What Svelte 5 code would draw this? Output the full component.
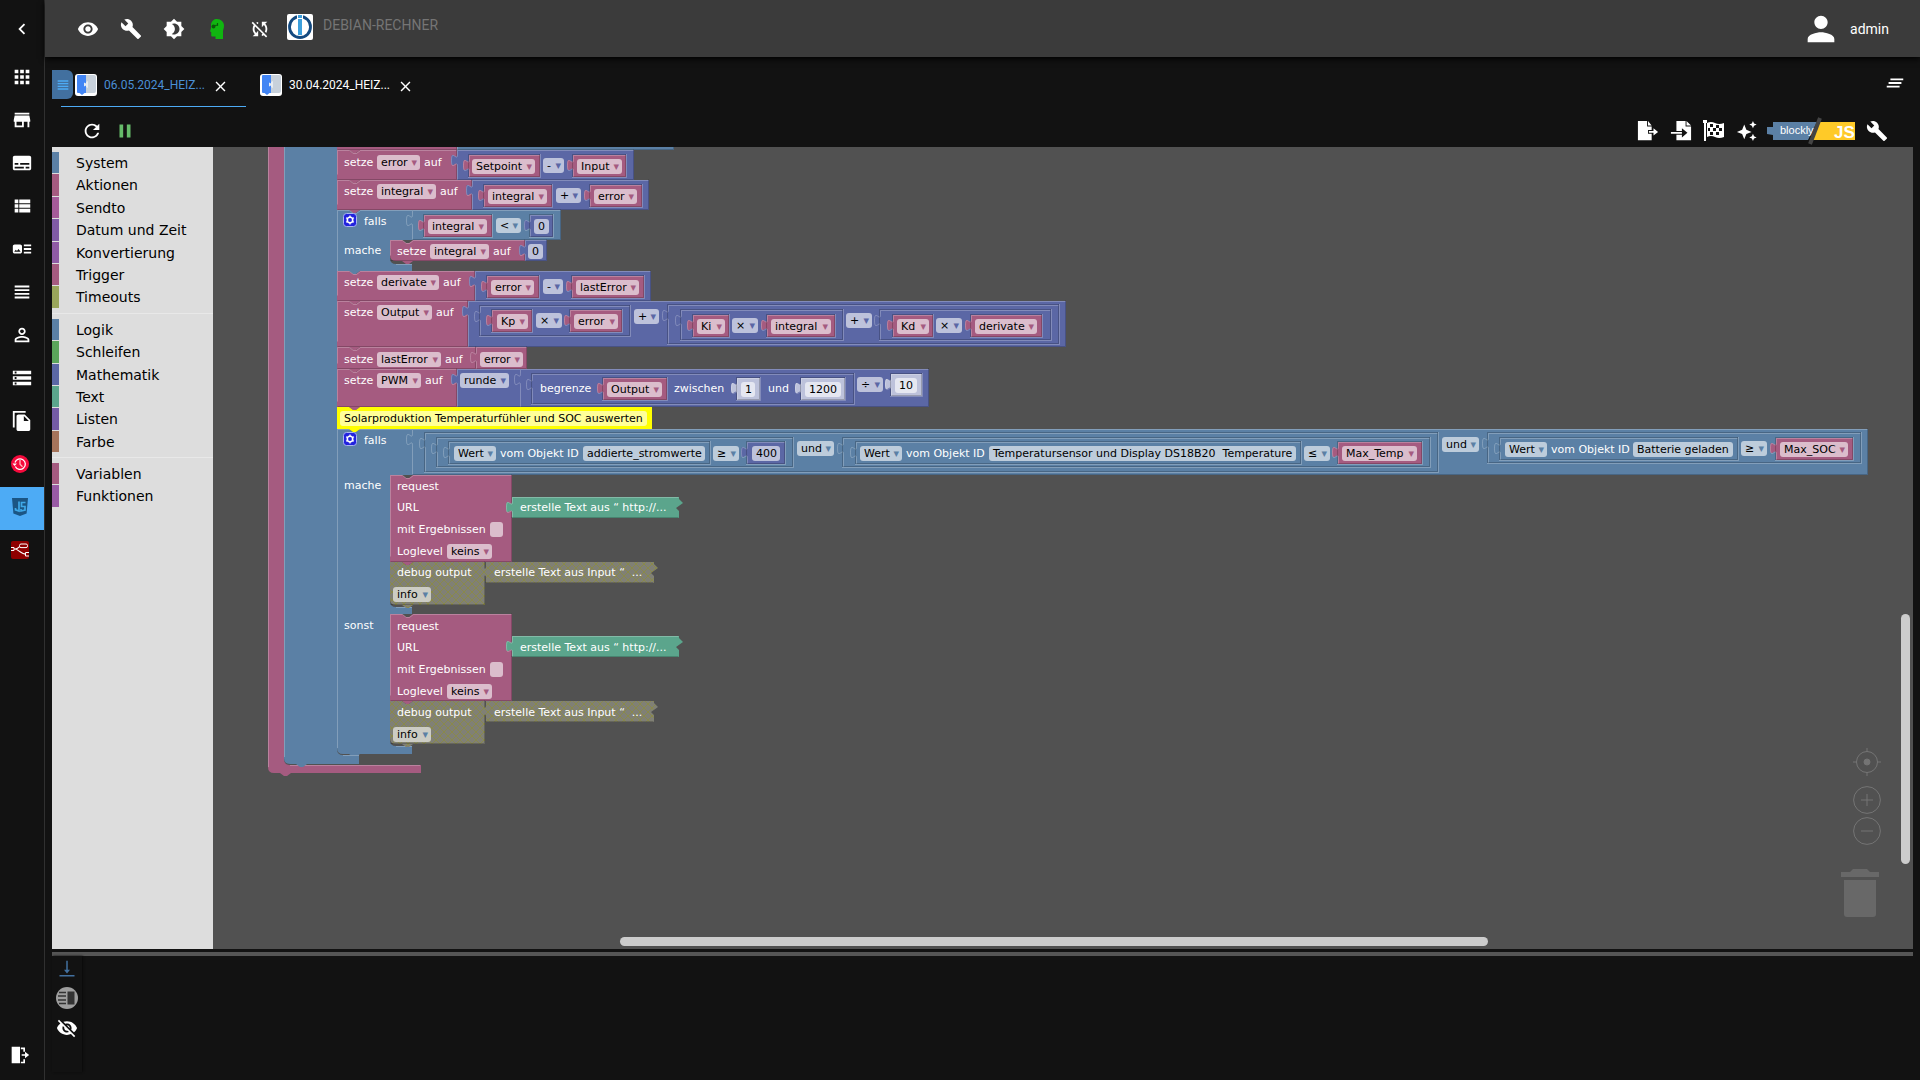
<script lang="ts">
  type Tone = 'pink' | 'blue' | 'math' | 'green' | 'pale' | 'off';
  type Block = { kind: 's' | 'v'; tone: Tone; x: number; y: number; w: number; h: number; nested?: boolean; last?: boolean; cut?: boolean };
  type Field = { kind: string; tone: Tone | 'note'; x: number; y: number; w: number; text: string };

  const fills: Record<string, string> = {
    pink: '#a55b80',
    blue: '#5b80a5',
    math: '#5b67a5',
    green: '#5ba58c',
    pale: '#bdc2db',
    off: 'url(#disabled)'
  };

  // how far the workspace is scrolled
  const scroll = { x: 213, y: 147 };

  const icons: Record<string, string> = {
    chevron: 'M15.41 7.41 14 6l-6 6 6 6 1.41-1.41L10.83 12z',
    apps: 'M4 8h4V4H4v4zm6 12h4v-4h-4v4zm-6 0h4v-4H4v4zm0-6h4v-4H4v4zm6 0h4v-4h-4v4zm6-10v4h4V4h-4zm-6 4h4V4h-4v4zm6 6h4v-4h-4v4zm0 6h4v-4h-4v4z',
    store: 'M20 4H4v2h16V4zm1 10v-2l-1-5H4l-1 5v2h1v6h10v-6h4v6h2v-6h1zm-9 4H6v-4h6v4z',
    subtitles: 'M20 4H4c-1.1 0-2 .9-2 2v12c0 1.1.9 2 2 2h16c1.1 0 2-.9 2-2V6c0-1.1-.9-2-2-2zM4 12h4v2H4v-2zm10 6H4v-2h10v2zm6 0h-4v-2h4v2zm0-4H10v-2h10v2z',
    list: 'M4 14h4v-4H4v4zm0 5h4v-4H4v4zM4 9h4V5H4v4zm5 5h12v-4H9v4zm0 5h12v-4H9v4zM9 5v4h12V5H9z',
    track: 'M22 13h-8v-2h8v2zm0-6h-8v2h8V7zm-8 10h8v-2h-8v2zm-2-8v6c0 1.1-.9 2-2 2H4c-1.1 0-2-.9-2-2V9c0-1.1.9-2 2-2h6c1.1 0 2 .9 2 2zm-1.5 6l-2.25-3-1.75 2.26-1.25-1.51L3.5 15h7z',
    headline: 'M4 15h16v-2H4v2zm0 4h16v-2H4v2zm0-8h16V9H4v2zm0-6v2h16V5H4z',
    user: 'M12 5.9c1.16 0 2.1.94 2.1 2.1s-.94 2.1-2.1 2.1S9.9 9.16 9.9 8s.94-2.1 2.1-2.1m0 9c2.97 0 6.1 1.46 6.1 2.1v1.1H5.9V17c0-.64 3.13-2.1 6.1-2.1M12 4C9.79 4 8 5.79 8 8s1.79 4 4 4 4-1.79 4-4-1.79-4-4-4zm0 9c-2.67 0-8 1.34-8 4v3h16v-3c0-2.66-5.33-4-8-4z',
    storage: 'M2 20h20v-4H2v4zm2-3h2v2H4v-2zM2 4v4h20V4H2zm4 3H4V5h2v2zm-4 7h20v-4H2v4zm2-3h2v2H4v-2z',
    copy: 'M16 1H2v18h2V3h12V1zm-1 4 6 6v10c0 1.1-.9 2-2 2H7.99C6.89 23 6 22.1 6 21l.01-14c0-1.1.89-2 1.99-2h7zm-1 7h5.5L14 6.5V12z',
    exit: 'M2 2h10v20H2zM13 3h5v5h-2V5h-3zM13 20h3v-3h2v5h-5zM14 11h4V8l5 4-5 4v-3h-4z',
    eye: 'M12 4.5C7 4.5 2.73 7.61 1 12c1.73 4.39 6 7.5 11 7.5s9.27-3.11 11-7.5c-1.73-4.39-6-7.5-11-7.5zM12 17c-2.76 0-5-2.24-5-5s2.24-5 5-5 5 2.24 5 5-2.24 5-5 5zm0-8c-1.66 0-3 1.34-3 3s1.34 3 3 3 3-1.34 3-3-1.34-3-3-3z',
    eyeOff: 'M12 7c2.76 0 5 2.24 5 5 0 .65-.13 1.26-.36 1.83l2.92 2.92c1.51-1.26 2.7-2.89 3.43-4.75-1.73-4.39-6-7.5-11-7.5-1.4 0-2.74.25-3.98.7l2.16 2.16C10.74 7.13 11.35 7 12 7zM2 4.27l2.28 2.28.46.46C3.08 8.3 1.78 10.02 1 12c1.73 4.39 6 7.5 11 7.5 1.55 0 3.03-.3 4.38-.84l.42.42L19.73 22 21 20.73 3.27 3 2 4.27zM7.53 9.8l1.55 1.55c-.05.21-.08.43-.08.65 0 1.66 1.34 3 3 3 .22 0 .44-.03.65-.08l1.55 1.55c-.67.33-1.41.53-2.2.53-2.76 0-5-2.24-5-5 0-.79.2-1.53.53-2.2zm4.31-.78 3.15 3.15.02-.16c0-1.66-1.34-3-3-3l-.17.01z',
    wrench: 'M22.7 19l-9.1-9.1c.9-2.3.4-5-1.5-6.9-2-2-5-2.4-7.4-1.3L9 6 6 9 1.6 4.7C.4 7.1.9 10.1 2.9 12.1c1.9 1.9 4.6 2.4 6.9 1.5l9.1 9.1c.4.4 1 .4 1.4 0l2.3-2.3c.5-.4.5-1.1.1-1.4z',
    theme: 'M20 8.69V4h-4.69L12 .69 8.69 4H4v4.69L.69 12 4 15.31V20h4.69L12 23.31 15.31 20H20v-4.69L23.31 12 20 8.69zM12 18c-.89 0-1.74-.2-2.5-.55C11.56 16.5 13 14.42 13 12s-1.44-4.5-3.5-5.45C10.26 6.2 11.11 6 12 6c3.31 0 6 2.69 6 6s-2.69 6-6 6z',
    syncOff: 'M10 6.35V4.26c-.8.21-1.55.54-2.23.96l1.46 1.46c.25-.12.5-.24.77-.33zm-7.14-.94l2.36 2.36C4.45 8.99 4 10.44 4 12c0 2.21.91 4.2 2.36 5.64L4 20h6v-6l-2.24 2.24C6.68 15.15 6 13.66 6 12c0-1 .25-1.94.68-2.77l8.08 8.08c-.25.13-.5.25-.77.34v2.09c.8-.21 1.55-.54 2.23-.96l2.36 2.36 1.27-1.27L4.14 4.14 2.86 5.41zM20 4h-6v6l2.24-2.24C17.32 8.85 18 10.34 18 12c0 1-.25 1.94-.68 2.77l1.46 1.46C19.55 15.01 20 13.56 20 12c0-2.21-.91-4.2-2.36-5.64L20 4z',
    person: 'M12 12c2.21 0 4-1.79 4-4s-1.79-4-4-4-4 1.79-4 4 1.79 4 4 4zm0 2c-2.67 0-8 1.34-8 4v2h16v-2c0-2.66-5.33-4-8-4z',
    close: 'M19 6.41 17.59 5 12 10.59 6.41 5 5 6.41 10.59 12 5 17.59 6.41 19 12 13.41 17.59 19 19 17.59 13.41 12z',
    clearAll: 'M5 13h14v-2H5v2zm-2 4h14v-2H3v2zM7 7v2h14V7H7z',
    refresh: 'M17.65 6.35C16.2 4.9 14.21 4 12 4c-4.42 0-7.99 3.58-7.99 8s3.57 8 7.99 8c3.73 0 6.84-2.55 7.73-6h-2.08c-.82 2.33-3.04 4-5.65 4-3.31 0-6-2.69-6-6s2.69-6 6-6c1.66 0 3.14.69 4.22 1.78L13 11h7V4l-2.35 2.35z',
    pause: 'M6 19h4V5H6v14zm8-14v14h4V5h-4z',
    exportFile: 'M1 1h10v6h5v4h-4v4h4v7H1zM12 1l4 5h-4zM13 12h5V9l5 4-5 4v-3h-5z',
    importFile: 'M7 1h10v6h6v15H7v-6h6v3l6-5-6-5v3H7zM18 1l5 5h-5zM1 13h12v2H1z',
    stars: 'M9 5l2.3 5.7L17 13l-5.700 2.300L9 21l-2.300-5.700L1 13l5.700-2.300zM18.500 1l1.200 2.800 2.800 1.200-2.800 1.200-1.200 2.800-1.200-2.800L14.500 5l2.800-1.200zM18.500 15l1.200 2.800 2.800 1.200-2.800 1.200-1.200 2.800-1.200-2.800-2.800-1.200 2.800-1.200z',
    download: 'M11 1h2v12h3l-4 5-4-5h3zM2 20h20v2H2z'
  };

  const nav = [
    ['apps', 'Übersicht'], ['store', 'Adapter'], ['subtitles', 'Instanzen'], ['list', 'Objekte'],
    ['track', 'Aufzählungen'], ['headline', 'Protokolle'], ['user', 'Benutzer'], ['storage', 'Hosts'],
    ['copy', 'Dateien'], ['history', 'Backup'], ['js', 'Skripte'], ['nodered', 'Node-RED']
  ];

  const groups = [
    [['System', '#5b80a5'], ['Aktionen', '#a55b80'], ['Sendto', '#a55b99'], ['Datum und Zeit', '#805ba5'], ['Konvertierung', '#8f5ba5'], ['Trigger', '#a55b80'], ['Timeouts', '#99a55b']],
    [['Logik', '#5b80a5'], ['Schleifen', '#5ba55b'], ['Mathematik', '#5b67a5'], ['Text', '#5ba58c'], ['Listen', '#745ba5'], ['Farbe', '#a5745b']],
    [['Variablen', '#a55b80'], ['Funktionen', '#995ba5']]
  ];

  const tabs = [
    { name: '06.05.2024_HEIZ...', active: true },
    { name: '30.04.2024_HEIZ...', active: false }
  ];

  const s = (tone: Tone, x: number, y: number, x2: number, y2: number, last = false): Block =>
    ({ kind: 's', tone, x, y, w: x2 - x, h: y2 - y, last });
  const v = (tone: Tone, x: number, y: number, x2: number, y2: number, nested = false): Block =>
    ({ kind: 'v', tone, x, y, w: x2 - x, h: y2 - y, nested });
  const n = (tone: Tone, x: number, y: number, x2: number, y2: number) => v(tone, x, y, x2, y2, true);

  const requestBlocks = (y: number): Block[] => [
    s('pink', 390, y, 512, y + 87),
    { ...v('green', 512, y + 22, 679, y + 43), cut: true },
    s('off', 390, y + 87, 485, y + 130, true),
    { ...v('off', 486, y + 87, 654, y + 108), cut: true }
  ];

  const blocks: Block[] = [
    s('pink', 337, 120, 457, 150), v('blue', 457, 120, 674, 150),
    s('pink', 337, 150, 457, 180), v('math', 457, 150, 634, 180),
    n('pink', 469, 155, 540, 177), n('pink', 573, 155, 626, 177),
    s('pink', 337, 180, 472, 210), v('math', 472, 180, 649, 210),
    n('pink', 484, 185, 552, 207), n('pink', 590, 185, 642, 207),
    v('blue', 412, 210, 561, 240), n('pink', 424, 215, 492, 237), n('math', 530, 215, 553, 237),
    s('pink', 390, 240, 525, 261, true), v('math', 525, 240, 547, 261),
    s('pink', 337, 271, 475, 301), v('math', 475, 271, 651, 301),
    n('pink', 487, 276, 539, 298), n('pink', 572, 276, 644, 298),
    s('pink', 337, 301, 468, 347), v('math', 468, 301, 1066, 347),
    n('math', 480, 306, 630, 336), n('pink', 492, 310, 532, 332), n('pink', 570, 310, 622, 332),
    n('math', 668, 305, 1059, 344), n('math', 681, 310, 843, 340), n('pink', 693, 315, 729, 337), n('pink', 767, 315, 835, 337),
    n('math', 880, 310, 1051, 340), n('pink', 893, 315, 933, 337), n('pink', 971, 315, 1042, 337),
    s('pink', 337, 347, 476, 369), v('pink', 476, 347, 527, 369),
    s('pink', 337, 369, 457, 407), v('math', 457, 369, 929, 407), v('math', 520, 369, 929, 407),
    n('math', 532, 374, 854, 404), n('pink', 603, 378, 667, 400),
    n('pale', 737, 378, 760, 400), n('pale', 801, 378, 845, 400), n('pale', 891, 374, 922, 396)
  ];

  const lowerBlocks: Block[] = [
    v('blue', 412, 429, 1868, 475),
    n('blue', 425, 433, 1438, 472), n('blue', 437, 438, 793, 467), n('blue', 449, 442, 710, 464), n('math', 747, 442, 785, 464),
    n('blue', 843, 438, 1430, 467), n('blue', 856, 442, 1301, 464), n('pink', 1338, 442, 1422, 464),
    n('blue', 1488, 433, 1861, 463), n('blue', 1500, 438, 1738, 460), n('pink', 1776, 438, 1853, 460),
    ...requestBlocks(475),
    ...requestBlocks(614)
  ];

  const label = (x: number, y: number, text: string): Field => ({ kind: 'label', tone: 'blue', x, y, w: 0, text });
  const sel = (tone: Tone, x: number, y: number, x2: number, text: string): Field => ({ kind: 'select', tone, x, y, w: x2 - x, text });
  const num = (tone: Tone, x: number, y: number, x2: number, text: string): Field => ({ kind: 'input', tone, x, y, w: x2 - x, text });
  const btn = (x: number, y: number, x2: number, text: string): Field => ({ kind: 'button', tone: 'blue', x, y, w: x2 - x, text });
  // "setze <variable> auf"
  const setter = (x: number, y: number, x2: number, name: string): Field[] =>
    [label(x, y, 'setze'), sel('pink', x + 33, y, x2, name), label(x2 + 4, y, 'auf')];

  const requestFields = (y: number): Field[] => [
    label(397, y + 4, 'request'),
    label(397, y + 25, 'URL'), label(520, y + 25, 'erstelle Text aus “ http://...'),
    label(397, y + 47, 'mit Ergebnissen'), { kind: 'check', tone: 'pink', x: 490, y: y + 47, w: 13, text: 'mit Ergebnissen' },
    label(397, y + 69, 'Loglevel'), sel('pink', 447, y + 69, 492, 'keins'),
    label(397, y + 90, 'debug output'), label(494, y + 90, 'erstelle Text aus Input “  ...'),
    sel('off', 393, y + 112, 431, 'info')
  ];

  const fields: Field[] = [
    ...setter(344, 155, 420, 'error'), sel('pink', 472, 159, 535, 'Setpoint'), sel('math', 543, 158, 564, '-'), sel('pink', 577, 159, 622, 'Input'),
    ...setter(344, 184, 436, 'integral'), sel('pink', 488, 189, 547, 'integral'), sel('math', 556, 188, 581, '+'), sel('pink', 594, 189, 637, 'error'),
    label(364, 214, 'falls'), sel('pink', 428, 219, 487, 'integral'), sel('blue', 496, 218, 521, '<'), num('math', 534, 219, 549, '0'),
    label(344, 243, 'mache'), ...setter(397, 244, 489, 'integral'), num('math', 528, 244, 543, '0'),
    ...setter(344, 275, 439, 'derivate'), sel('pink', 491, 280, 534, 'error'), sel('math', 543, 279, 563, '-'), sel('pink', 576, 280, 639, 'lastError'),
    ...setter(344, 305, 432, 'Output'), sel('pink', 497, 314, 528, 'Kp'), sel('math', 536, 313, 562, '×'), sel('pink', 574, 314, 618, 'error'),
    sel('math', 634, 309, 659, '+'), sel('pink', 697, 319, 725, 'Ki'), sel('math', 732, 318, 758, '×'), sel('pink', 771, 319, 831, 'integral'),
    sel('math', 846, 313, 872, '+'), sel('pink', 897, 319, 929, 'Kd'), sel('math', 936, 318, 962, '×'), sel('pink', 975, 319, 1037, 'derivate'),
    ...setter(344, 352, 441, 'lastError'), sel('pink', 480, 352, 523, 'error'),
    ...setter(344, 373, 421, 'PWM'), sel('math', 460, 373, 509, 'runde'),
    label(540, 381, 'begrenze'), sel('pink', 607, 382, 662, 'Output'), label(674, 381, 'zwischen'), num('pale', 741, 382, 755, '1'),
    label(768, 381, 'und'), num('pale', 805, 382, 841, '1200'), sel('math', 857, 377, 883, '÷'), num('pale', 895, 378, 917, '10'),
    { kind: 'input', tone: 'note', x: 340, y: 411, w: 307, text: 'Solarproduktion Temperaturfühler und SOC auswerten' },
    label(364, 433, 'falls'),
    sel('blue', 454, 446, 496, 'Wert'), label(500, 446, 'vom Objekt ID'), btn(583, 446, 705, 'addierte_stromwerte'), sel('blue', 713, 446, 739, '≥'), num('math', 752, 446, 780, '400'),
    sel('blue', 797, 441, 834, 'und'),
    sel('blue', 860, 446, 902, 'Wert'), label(906, 446, 'vom Objekt ID'), btn(989, 446, 1296, 'Temperatursensor und Display DS18B20  Temperature'), sel('blue', 1304, 446, 1330, '≤'), sel('pink', 1342, 446, 1417, 'Max_Temp'),
    sel('blue', 1442, 437, 1479, 'und'),
    sel('blue', 1505, 442, 1547, 'Wert'), label(1551, 442, 'vom Objekt ID'), btn(1633, 442, 1733, 'Batterie geladen'), sel('blue', 1741, 441, 1767, '≥'), sel('pink', 1780, 442, 1848, 'Max_SOC'),
    label(344, 478, 'mache'), ...requestFields(475),
    label(344, 618, 'sonst'), ...requestFields(615)
  ];

  const tab = 'v4c0 8-6-6-6 6s6-2 6 6';

  function shape(b: Block) {
    const { x, y, w, h } = b;
    if (b.kind === 'v') {
      // collapsed blocks end in a torn edge
      const right = b.cut ? `V${y + 14}l-3-3 7-5-4-4V${y}` : `V${y}`;
      return `M${x} ${y}${tab}V${y + h}H${x + w}${right}z`;
    }
    const corner = b.last ? `H${x + 6}q-6 0-6-6` : `H${x}`;
    return `M${x} ${y}h12l4 3h3l4-3H${x + w}v${h}H${x + 23}l-4 3h-3l-4-3${corner}z`;
  }

  function light(b: Block) {
    const x = b.x + 0.5;
    const y = b.y + 0.5;
    if (b.kind === 'v') return `M${x + b.w - 1} ${y}H${x}${tab}V${y + b.h - 1}`;
    return `M${x} ${y + b.h - 6}V${y}h12l4 3h3l4-3H${x + b.w - 1}`;
  }

  function dark(b: Block) {
    const x = b.x - 0.5;
    const y = b.y - 0.5;
    return b.cut ? `M${x} ${y + b.h}h${b.w}` : `M${x + b.w} ${y}v${b.h}H${x + 1}`;
  }

  // edge of the socket a nested block sits in
  function socket(b: Block) {
    return `M${b.x + b.w + 0.5} ${b.y - 1}v${b.h + 1.5}H${b.x - 1}`;
  }
</script>

{#snippet icon(name: string, size = 22)}
  <svg width={size} height={size} viewBox="0 0 24 24" fill="currentColor" aria-hidden="true"><path d={icons[name]} /></svg>
{/snippet}

{#snippet piece(b: Block)}
  <path d={shape(b)} fill={fills[b.tone]} />
  {#if b.tone !== 'off'}
    <path class="light" d={light(b)} />
  {/if}
  <path class="dark" d={dark(b)} />
  {#if b.nested}
    <path class="light" d={socket(b)} />
    <path class="dark" d="M{b.x - 0.5} {b.y + b.h}V{b.y - 0.5}H{b.x + b.w}" />
  {/if}
{/snippet}

{#snippet gear(y: number)}
  <g transform="translate(344 {y})">
    <rect x="-0.500" y="-0.500" width="13" height="13" rx="3" fill="#2222dd" stroke="#a9b4f0" />
    <circle cx="6" cy="6" r="2.700" fill="none" stroke="#fff" stroke-width="1.600" />
    <path d="M6 1.500v9M2.100 3.800l7.800 4.400M2.100 8.200l7.800-4.400" stroke="#fff" stroke-width="1.300" />
    <circle cx="6" cy="6" r="1.900" fill="#2222dd" />
  </g>
{/snippet}

<div class="app">
  <nav class="side">
    <button class="collapse" aria-label="Menü einklappen">{@render icon('chevron')}</button>
    {#each nav as [name, title]}
      <a class="side-link" class:active={name === 'js'} href="#{name}" aria-label={title}>
        {#if name === 'history'}
          <svg class="brand" viewBox="0 0 18 18">
            <circle cx="9" cy="9" r="9" fill="#f50a3c" />
            <path d="M4.300 11.500A5.300 5.300 0 1 0 4 7.500" fill="none" stroke="#fff" stroke-width="1.300" />
            <path d="M1.500 8.500h4.400L3.600 11z" fill="#fff" />
            <path d="M9 5v4.300l2.500 2.500" fill="none" stroke="#fbb" stroke-width="1.300" />
          </svg>
        {:else if name === 'js'}
          <svg class="brand" viewBox="0 0 18 18">
            <path d="M1 0h16l-1.400 15.500L9 18l-6.600-2.500z" fill="#1b5584" />
            <path d="M8 3.500v9.500l-3.500-1.200V10M14.500 4.500H10.500v4h3.500V12L10 13v-2" fill="none" stroke="#3fa9e8" stroke-width="1.700" />
          </svg>
        {:else if name === 'nodered'}
          <svg class="brand" viewBox="0 0 18 18">
            <rect width="18" height="18" rx="2" fill="#8f0000" />
            <path d="M0 8h4c4 0 4 5 13 5.500M4 8c4 0 4-3.500 7-3.500" fill="none" stroke="#fff" stroke-width="1.100" />
            <rect x="8.500" y="3" width="8" height="3.600" rx="1.500" fill="#8f0000" stroke="#fff" />
            <path d="M0 6.500h3v3H0M18 11.500h-3.500v3.500H18" fill="#8f0000" stroke="#fff" />
          </svg>
        {:else}
          {@render icon(name)}
        {/if}
      </a>
    {/each}
    <a class="side-link logout" href="#logout" aria-label="Abmelden">{@render icon('exit', 20)}</a>
  </nav>

  <main>
    <header>
      <button aria-label="Sichtbarkeit">{@render icon('eye')}</button>
      <button aria-label="Einstellungen">{@render icon('wrench')}</button>
      <button aria-label="Farbschema">{@render icon('theme')}</button>
      <button aria-label="Expertenmodus">
        <svg width="14" height="20" viewBox="0 0 14 20">
          <path d="M7 0c4 0 7 3 7 6.500 0 3-1 4-1 6V20H5.500v-2.500H2.500c-1 0-1.300-.6-1.300-1.600V13L0 12.500 1 9V5.500C1.500 2 4 0 7 0z" fill="#10b510" />
          <circle cx="3.500" cy="7.500" r="2" fill="#0a5a0a" /><path d="M5 6.500 8 6M7.500 4v3" stroke="#0a5a0a" stroke-width="1.200" />
        </svg>
      </button>
      <button aria-label="Synchronisierung aus">{@render icon('syncOff')}</button>
      <svg class="logo" viewBox="0 0 26 26" aria-hidden="true">
        <rect width="26" height="26" rx="2" fill="#fff" />
        <circle cx="13" cy="13" r="10.500" fill="none" stroke="#144a80" stroke-width="2.800" />
        <path d="M10 0h6v6h-6z" fill="#fff" />
        <path d="M11 1h4v3h-4zM11 5h4v16h-4z" fill="#3c9fdc" />
      </svg>
      <span class="host">DEBIAN-RECHNER</span>
      <div class="account">{@render icon('person', 40)}<span>admin</span></div>
    </header>

    <div class="tabs">
      <button class="menu" aria-label="Skriptliste">{@render icon('headline', 16)}</button>
      {#each tabs as t}
        <div class="tab" class:current={t.active}>
          <svg width="22" height="22" viewBox="0 0 22 22" aria-hidden="true">
            <rect width="22" height="22" rx="3" fill="#fff" />
            <path d="M11 1h8q2 0 2 2v14q0 2-2 2h-8z" fill="#c8d1db" />
            <path d="M3 1h8v18H9.500l-2.500 2-2.500-2H3q-1 0-1-1V2q0-1 1-1z" fill="#4285f4" />
            <path d="M9 8.500l2 1V8l2-1v7l-2-1v-1.500l-2 1z" fill="#e6ebf2" />
          </svg>
          <a href="#script">{t.name}</a>
          <button aria-label="Schließen">{@render icon('close', 17)}</button>
        </div>
      {/each}
      <button class="clear" aria-label="Alle schließen">{@render icon('clearAll')}</button>
    </div>

    <div class="tools">
      <button aria-label="Neu laden">{@render icon('refresh')}</button>
      <button class="pause" aria-label="Pause">{@render icon('pause')}</button>
      <span class="spacer"></span>
      <button aria-label="Exportieren">{@render icon('exportFile')}</button>
      <button aria-label="Importieren">{@render icon('importFile')}</button>
      <button aria-label="Blöcke prüfen">
        <svg width="22" height="22" viewBox="0 0 22 22" fill="currentColor">
          <path d="M1 1h2v20H1zM0 0h4v3H0z" />
          <path d="M4 3q4-2 8 0t9 0v14q-5 2-9 0t-8 0z" />
          <path d="M7 4h3v3H7zM13 5h3v3h-3zM10 8h3v3h-3zM16 8h3v3h-3zM5 8h2v3H5zM7 12h3v3H7zM13 12h3v3h-3z" fill="#121212" />
        </svg>
      </button>
      <button aria-label="Aufräumen">{@render icon('stars')}</button>
      <button class="switch" aria-label="Blockly oder JS">
        <svg width="88" height="28" viewBox="0 0 88 28">
          <path d="M6 5h44l-9 18H6v-5l-6-1v-7h6z" fill="#5b80a5" />
          <path d="M53 5h35v18H44z" fill="#ffca28" />
          <path d="M53 1 43 27" stroke="#444" stroke-width="4" />
          <text x="13" y="17" class="word">blockly</text>
          <text x="67" y="21" class="js">JS</text>
        </svg>
      </button>
      <button aria-label="Debuggen">{@render icon('wrench')}</button>
    </div>

    <div class="editor">
      <div class="toolbox" role="tree" aria-label="Blöcke">
        {#each groups as group}
          <div class="group" role="group">
            {#each group as [name, color]}
              <div class="category" role="treeitem" aria-selected="false" style="--bar: {color}">{name}</div>
            {/each}
          </div>
        {/each}
      </div>

      <div class="workspace">
        <svg class="blocks" aria-hidden="true">
          <defs>
            <pattern id="disabled" patternUnits="userSpaceOnUse" width="8" height="8">
              <rect width="8" height="8" fill="#808075" />
              <path d="M0 0l8 8M8 0L0 8" stroke="#8c8c40" stroke-width="0.800" />
            </pattern>
          </defs>
          <g transform="translate({-scroll.x} {-scroll.y})">
            <!-- trigger and outer if -->
            <path d="M268 140h16v619q0 6 6 6H421v8H291l-4 3h-3l-4-3H274q-6 0-6-6z" fill={fills.pink} />
            <path class="light" d="M268.500 140v627M290 765.500H420" />
            <path d="M284 140h53v609q0 6 6 6H359v9H307l-4 3h-3l-4-3H290q-6 0-6-6z" fill={fills.blue} />
            <path class="light" d="M284.500 140v617" />
            {#each blocks.slice(0, 10) as b}{@render piece(b)}{/each}

            <path d="M337 210h12l4 3h3l4-3H412v30H390v18q0 6 6 6H412v7H360l-4 3h-3l-4-3H337z" fill={fills.blue} />
            <path class="light" d="M337.500 271v-60.500h12l4 3h3l4-3H412M396 264.500h16" />
            {@render gear(214)}
            {#each blocks.slice(10) as b}{@render piece(b)}{/each}

            <path d="M337 429h12l4 3h3l4-3H412v46H390v126q0 6 6 6H412v7H390v126q0 6 6 6H412v8H360l-4 3h-3l-4-3H343q-6 0-6-6z" fill={fills.blue} />
            <path class="light" d="M337.500 748V429.500h75M396 607.500h16M396 746.500h16M343 755.500h16" />
            {@render gear(433)}
            <path d="M337 407h12l4 3h3l4-3H652v22H360l-4 3h-3l-4-3H337z" fill="#ffff00" />
            {#each lowerBlocks as b}{@render piece(b)}{/each}
          </g>
        </svg>

        {#each fields as f}
          {@const place = `left: ${f.x - scroll.x}px; top: ${f.y - scroll.y}px;`}
          {#if f.kind === 'label'}
            <span class="label" style={place}>{f.text}</span>
          {:else if f.kind === 'select'}
            <span class="field {f.tone}" style="{place} width: {f.w}px">
              <select aria-label={f.text}><option>{f.text}</option></select>
              <span class="arrow">▾</span>
            </span>
          {:else if f.kind === 'input'}
            <input class="field {f.tone}" style="{place} width: {f.w}px" value={f.text} aria-label="Wert" />
          {:else if f.kind === 'check'}
            <input class="field {f.tone}" type="checkbox" style="{place} width: {f.w}px" aria-label={f.text} />
          {:else}
            <button class="field {f.tone}" style="{place} width: {f.w}px">{f.text}</button>
          {/if}
        {/each}

        <div class="zoom">
          <button aria-label="Zentrieren">
            <svg width="28" height="28" viewBox="0 0 28 28"><circle cx="14" cy="14" r="10.500" /><circle cx="14" cy="14" r="3" class="dot" /><path d="M14 0v4M14 24v4M0 14h4M24 14h4" /></svg>
          </button>
          <button aria-label="Vergrößern">
            <svg width="28" height="28" viewBox="0 0 28 28"><circle cx="14" cy="14" r="13.400" /><path d="M14 8v12M8 14h12" /></svg>
          </button>
          <button aria-label="Verkleinern">
            <svg width="28" height="28" viewBox="0 0 28 28"><circle cx="14" cy="14" r="13.400" /><path d="M8 14h12" /></svg>
          </button>
        </div>
        <svg class="trash" viewBox="0 0 38 48" aria-hidden="true">
          <path d="M0 3h9l3-3h14l3 3h9v5H0zM3 11h32v34q0 3-3 3H6q-3 0-3-3z" />
        </svg>
        <div class="bar vertical"></div>
        <div class="bar horizontal"></div>
      </div>
    </div>

    <div class="splitter"></div>

    <section class="console">
      <div class="console-tools">
        <button class="follow" aria-label="Zum Ende">{@render icon('download', 18)}</button>
        <button aria-label="Ausrichtung">
          <svg width="22" height="22" viewBox="0 0 22 22">
            <circle cx="11" cy="11" r="11" fill="#9e9e9e" />
            <path d="M11.500 4.500h7v13h-7z" fill="#333" />
            <path d="M3 5.500h7M2 9h8M2 13h8M3 16.500h7" stroke="#333" stroke-width="1.300" />
          </svg>
        </button>
        <button aria-label="Protokoll ausblenden">{@render icon('eyeOff')}</button>
      </div>
    </section>
  </main>
</div>

<style>
  :global(body) {
    background: #121212;
  }

  .app {
    display: flex;
    height: 100vh;
    overflow: hidden;
    color: #fff;
    font-family: Roboto, "Liberation Sans", sans-serif;
  }

  button {
    display: flex;
    align-items: center;
    justify-content: center;
    padding: 0;
    border: 0;
    background: none;
    color: inherit;
    font: inherit;
  }

  svg {
    display: block;
    flex: none;
  }

  .side {
    display: flex;
    flex-direction: column;
    flex: none;
    width: 44px;
    border-right: 1px solid #303030;
  }

  .collapse {
    height: 57px;
  }

  .side-link {
    display: flex;
    align-items: center;
    justify-content: center;
    box-sizing: border-box;
    height: 43px;
    padding-bottom: 3px;
    color: #fff;
  }

  .side-link.active {
    background: #4dabf5;
  }

  .brand {
    width: 18px;
    height: 18px;
    margin-right: 4px;
  }

  .logout {
    height: 48px;
    margin-top: auto;
    padding-right: 4px;
  }

  main {
    display: flex;
    flex: 1;
    flex-direction: column;
    min-width: 0;
  }

  header {
    display: flex;
    align-items: center;
    height: 57px;
    padding: 0 31px 0 21px;
    background: #3b3b3b;
    box-shadow: 0 2px 6px #000;
    z-index: 1;
  }

  header button {
    width: 43px;
    height: 43px;
  }

  .logo {
    width: 26px;
    height: 26px;
    margin: 0 10px 4px 6px;
  }

  .host {
    padding-bottom: 8px;
    color: #757575;
    font-size: 14px;
    line-height: 20px;
  }

  .account {
    display: flex;
    align-items: center;
    gap: 9px;
    margin-left: auto;
    font-size: 14px;
  }

  .tabs {
    display: flex;
    align-items: flex-start;
    height: 37px;
    padding: 13px 14px 4px 7px;
  }

  .menu {
    width: 21px;
    height: 29px;
    border-radius: 0 6px 6px 0;
    background: #42709f;
    color: #4dabf5;
  }

  .tab {
    display: flex;
    align-items: center;
    width: 160px;
    height: 29px;
    padding: 0 23px 0 2px;
    font-size: 12px;
  }

  .tab a {
    flex: 1;
    margin-left: 7px;
    color: #fff;
    text-decoration: none;
  }

  .tab.current a {
    color: #4a90d6;
  }

  .tab button {
    width: 32px;
    padding-top: 3px;
  }

  .clear {
    margin: 2px 0 0 auto;
  }

  .tabs::after {
    content: '';
    position: absolute;
    left: 61px;
    top: 106px;
    width: 185px;
    height: 1px;
    background: #4dabf5;
  }

  .tools {
    display: flex;
    align-items: center;
    box-sizing: border-box;
    height: 36px;
    padding: 3px 32px 0 36px;
    gap: 11px;
  }

  .pause {
    color: #66bb6a;
  }

  .spacer {
    flex: 1;
  }

  .switch {
    margin-left: -2px;
  }

  .word {
    fill: #fff;
    font: 11px "Liberation Sans", sans-serif;
  }

  .js {
    fill: #fff;
    font: bold 17px "Liberation Sans", sans-serif;
  }

  .editor {
    display: flex;
    flex: 1;
    min-height: 0;
    margin: 0 7px;
    font-family: "DejaVu Sans", sans-serif;
  }

  .toolbox {
    flex: none;
    width: 161px;
    padding-top: 5px;
    box-sizing: border-box;
    background: #ddd;
    color: #000;
    font-size: 14px;
    line-height: 1.6;
  }

  .group + .group {
    margin-top: 4px;
    padding-top: 5px;
    border-top: 1px solid #e8e8e8;
  }

  .category {
    padding-left: 17px;
    border-color: var(--bar);
    border-style: solid;
    border-width: 0 0 0 7px;
    border-image: linear-gradient(var(--bar) 90%, #ddd 90%) 1;
  }

  .workspace {
    position: relative;
    flex: 1;
    overflow: hidden;
    background: #515151;
    font-size: 11px;
  }

  .blocks {
    width: 100%;
    height: 100%;
  }

  .light {
    fill: none;
    stroke: #fff;
    stroke-opacity: 0.24;
  }

  .dark {
    fill: none;
    stroke: #000;
    stroke-opacity: 0.2;
  }

  .label,
  .field {
    position: absolute;
    height: 15px;
    line-height: 15px;
    white-space: pre;
  }

  .field {
    --ink: #5b80a5;
    box-sizing: border-box;
    margin: 0;
    padding: 0 0 0 4px;
    border: 0;
    border-radius: 3px;
    background: #bdccdb;
    color: #000;
    font: 11px/15px "DejaVu Sans", sans-serif;
    text-align: left;
    justify-content: flex-start;
  }

  .field.pink {
    --ink: #a55b80;
    background: #dbbdcc;
  }

  .field.math {
    --ink: #5b67a5;
    background: #bdc2db;
  }

  .field.pale {
    background: #e5e7f1;
  }

  .field.off {
    background: #ccccc4;
  }

  .field.note {
    background: #ffff99;
  }

  .field select {
    display: block;
    width: 100%;
    height: 15px;
    padding: 0;
    border: 0;
    appearance: none;
    background: none;
    color: inherit;
    font: inherit;
  }

  .arrow {
    position: absolute;
    top: 0;
    right: 3px;
    color: var(--ink);
    pointer-events: none;
  }

  input[type='checkbox'] {
    appearance: none;
  }

  .zoom {
    position: absolute;
    right: 32px;
    bottom: 104px;
    display: flex;
    flex-direction: column;
    gap: 3px;
  }

  .zoom button:first-child {
    margin-bottom: 7px;
  }

  .zoom svg {
    fill: none;
    stroke: #747474;
  }

  .zoom .dot {
    fill: #747474;
  }

  .trash {
    position: absolute;
    right: 34px;
    bottom: 32px;
    width: 38px;
    height: 48px;
    fill: #686868;
  }

  .bar {
    position: absolute;
    border-radius: 5px;
    background: #ccc;
  }

  .vertical {
    right: 3px;
    top: 467px;
    width: 9px;
    height: 250px;
  }

  .horizontal {
    left: 407px;
    bottom: 3px;
    width: 868px;
    height: 9px;
  }

  .splitter {
    height: 4px;
    margin: 3px 7px 0;
    background: #555;
  }

  .console {
    height: 124px;
    margin: 0 7px;
  }

  .console-tools {
    display: flex;
    flex-direction: column;
    align-items: center;
    gap: 8px;
    width: 30px;
    height: 116px;
    padding-top: 3px;
    box-sizing: border-box;
    box-shadow: 1px 0 2px #0a0a0a;
  }

  .follow {
    height: 20px;
    color: #42709f;
  }
</style>
